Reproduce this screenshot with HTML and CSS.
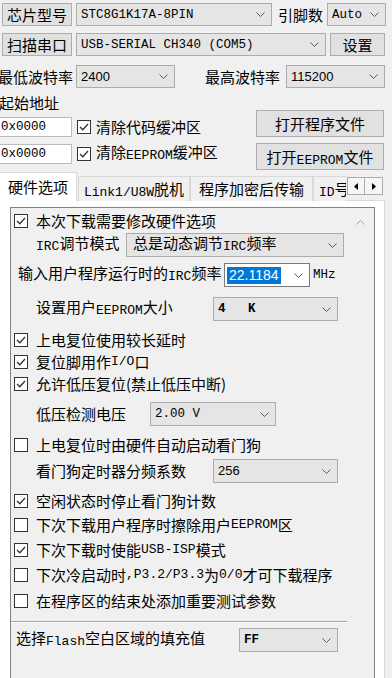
FILE: index.html
```html
<!DOCTYPE html>
<html lang="zh-CN">

<head>
    <meta charset="UTF-8">
    <meta name="viewport" content="width=device-width, initial-scale=1.0">
    <title>STC-ISP</title>
    <link rel="stylesheet" href="styles.css">
</head>

<body>
    <div class="root">
        <div class="bar bar-first">
            <button class="btn btn-head">芯片型号</button>
            <div class="combo combo-chip"><span class="en">STC8G1K17A-8PIN</span><svg class="chev" width="9" height="5" viewBox="0 0 9 5"><path d="M0.5 0.5L4.5 4.5L8.5 0.5"/></svg></div>
            <span class="head-label pin-label">引脚数</span>
            <div class="combo combo-pin"><span class="en">Auto</span><svg class="chev" width="9" height="5" viewBox="0 0 9 5"><path d="M0.5 0.5L4.5 4.5L8.5 0.5"/></svg></div>
        </div>
        <div class="bar">
            <button class="btn btn-head">扫描串口</button>
            <div class="combo combo-port"><span class="en">USB-SERIAL CH340 (COM5)</span><svg class="chev" width="9" height="5" viewBox="0 0 9 5"><path d="M0.5 0.5L4.5 4.5L8.5 0.5"/></svg></div>
            <button class="btn btn-set">设置</button>
        </div>
        <div class="bar bar-baud">
            <span class="head-label baud-min">最低波特率</span>
            <div class="combo combo-baud"><span class="num">2400</span><svg class="chev" width="9" height="5" viewBox="0 0 9 5"><path d="M0.5 0.5L4.5 4.5L8.5 0.5"/></svg></div>
            <span class="head-label baud-max">最高波特率</span>
            <div class="combo combo-baud"><span class="num">115200</span><svg class="chev" width="9" height="5" viewBox="0 0 9 5"><path d="M0.5 0.5L4.5 4.5L8.5 0.5"/></svg></div>
        </div>

        <div class="addr">
            <div class="addr-left">
                <div class="addr-title">起始地址</div>
                <div class="addr-row">
                    <div class="edit"><span class="en">0x0000</span></div>
                    <span class="cbx"><svg width="12" height="12" viewBox="0 0 12 12"><path d="M2 6L4.8 8.8L10 3"/></svg></span>
                    <span>清除代码缓冲区</span>
                </div>
                <div class="addr-row">
                    <div class="edit"><span class="en">0x0000</span></div>
                    <span class="cbx"><svg width="12" height="12" viewBox="0 0 12 12"><path d="M2 6L4.8 8.8L10 3"/></svg></span>
                    <span>清除<span class="en">EEPROM</span>缓冲区</span>
                </div>
            </div>
            <div class="addr-right">
                <button class="btn btn-file">打开程序文件</button>
                <button class="btn btn-file">打开<span class="en">EEPROM</span>文件</button>
            </div>
        </div>

        <div class="tabs">
            <div class="tab-list">
                <div class="tab tab-active">硬件选项</div>
                <div class="tab tab-link"><span class="en">Link1/U8W</span>脱机</div>
                <div class="tab tab-crypt">程序加密后传输</div>
                <div class="tab tab-id"><span class="en">ID</span>号</div>
            </div>
            <div class="spin">
                <div class="spin-btn"><svg width="4" height="7" viewBox="0 0 4 7"><path d="M4 0L0 3.5L4 7Z"/></svg></div>
                <div class="spin-btn"><svg width="4" height="7" viewBox="0 0 4 7"><path d="M0 0L4 3.5L0 7Z"/></svg></div>
            </div>
        </div>

        <div class="panel">
            <div class="option-box">
                <div class="option-list">
                    <div class="opt mt3"><span class="cbx"><svg width="12" height="12" viewBox="0 0 12 12"><path d="M2 6L4.8 8.8L10 3"/></svg></span>本次下载需要修改硬件选项</div>
                    <div class="field indent mt2">
                        <span class="field-label lbl-irc"><span class="en">IRC</span>调节模式</span>
                        <div class="combo combo-irc"><span>总是动态调节<span class="en">IRC</span>频率</span><svg class="chev" width="9" height="5" viewBox="0 0 9 5"><path d="M0.5 0.5L4.5 4.5L8.5 0.5"/></svg></div>
                    </div>
                    <div class="field row-freq mt6">
                        <span class="field-label lbl-freq">输入用户程序运行时的<span class="en">IRC</span>频率</span>
                        <div class="combo combo-edit"><span class="num num-freq sel">22.1184</span><svg class="chev" width="9" height="5" viewBox="0 0 9 5"><path d="M0.5 0.5L4.5 4.5L8.5 0.5"/></svg></div>
                        <span class="en unit">MHz</span>
                    </div>
                    <div class="field indent mt10">
                        <span class="field-label lbl-wide">设置用户<span class="en">EEPROM</span>大小</span>
                        <div class="combo combo-size"><span class="en bold">4&nbsp;&nbsp;&nbsp;K</span><svg class="chev" width="9" height="5" viewBox="0 0 9 5"><path d="M0.5 0.5L4.5 4.5L8.5 0.5"/></svg></div>
                    </div>
                    <div class="opt mt9"><span class="cbx"><svg width="12" height="12" viewBox="0 0 12 12"><path d="M2 6L4.8 8.8L10 3"/></svg></span>上电复位使用较长延时</div>
                    <div class="opt mt2"><span class="cbx"><svg width="12" height="12" viewBox="0 0 12 12"><path d="M2 6L4.8 8.8L10 3"/></svg></span>复位脚用作<span class="en">I/O</span>口</div>
                    <div class="opt mt2"><span class="cbx"><svg width="12" height="12" viewBox="0 0 12 12"><path d="M2 6L4.8 8.8L10 3"/></svg></span>允许低压复位(禁止低压中断)</div>
                    <div class="field indent mt8">
                        <span class="field-label lbl-lvd">低压检测电压</span>
                        <div class="combo combo-lvd"><span class="en">2.00 V</span><svg class="chev" width="9" height="5" viewBox="0 0 9 5"><path d="M0.5 0.5L4.5 4.5L8.5 0.5"/></svg></div>
                    </div>
                    <div class="opt mt9"><span class="cbx"></span>上电复位时由硬件自动启动看门狗</div>
                    <div class="field indent mt4">
                        <span class="field-label lbl-wide">看门狗定时器分频系数</span>
                        <div class="combo combo-size"><span class="num">256</span><svg class="chev" width="9" height="5" viewBox="0 0 9 5"><path d="M0.5 0.5L4.5 4.5L8.5 0.5"/></svg></div>
                    </div>
                    <div class="opt mt8"><span class="cbx"><svg width="12" height="12" viewBox="0 0 12 12"><path d="M2 6L4.8 8.8L10 3"/></svg></span>空闲状态时停止看门狗计数</div>
                    <div class="opt mt4"><span class="cbx"></span>下次下载用户程序时擦除用户<span class="en">EEPROM</span>区</div>
                    <div class="opt mt5"><span class="cbx"><svg width="12" height="12" viewBox="0 0 12 12"><path d="M2 6L4.8 8.8L10 3"/></svg></span>下次下载时使能<span class="en">USB-ISP</span>模式</div>
                    <div class="opt mt5"><span class="cbx"></span>下次冷启动时<span class="en">,P3.2/P3.3</span>为<span class="en">0/0</span>才可下载程序</div>
                    <div class="opt mt6"><span class="cbx"></span>在程序区的结束处添加重要测试参数</div>
                    <div class="sep"></div>
                    <div class="field row-fill mt5">
                        <span class="field-label lbl-fill">选择<span class="en">Flash</span>空白区域的填充值</span>
                        <div class="combo combo-fill"><span class="en bold">FF</span><svg class="chev" width="9" height="5" viewBox="0 0 9 5"><path d="M0.5 0.5L4.5 4.5L8.5 0.5"/></svg></div>
                    </div>
                </div>
                <div class="scroll">
                    <svg width="9" height="5" viewBox="0 0 9 5"><path d="M0.5 4.5L4.5 0.5L8.5 4.5"/></svg>
                </div>
            </div>
        </div>
    </div>
</body>

</html>
```

FILE: styles.css
```css
* {
    margin: 0;
    padding: 0;
    box-sizing: border-box;
}

body {
    width: 392px;
    height: 678px;
    overflow: hidden;
    background-color: #f0f0f0;
    font-family: "Noto Sans CJK SC", sans-serif;
    font-size: 15px;
    line-height: 20px;
    color: #000;
}

.en {
    font-family: "Liberation Mono", monospace;
    font-size: 12.5px;
}

/* latin inside chinese labels sits a bit lower, like the dialog font */
.opt .en,
.field-label .en,
.addr-row .en,
.btn .en,
.tab .en,
.combo-irc .en {
    font-size: 13px;
    vertical-align: -1px;
}

.bold {
    font-weight: bold;
}

.num {
    font-family: "Liberation Sans", sans-serif;
    font-size: 13px;
}

/* top rows */
.bar {
    display: flex;
    align-items: center;
    height: 23px;
    margin-top: 7px;
}

.bar-first {
    margin-top: 3px;
}

.bar-baud {
    margin-top: 9px;
}

.btn {
    font-family: inherit;
    font-size: 15px;
    color: #000;
    height: 23px;
    background-color: #e1e1e1;
    border: 1px solid #adadad;
    white-space: nowrap;
    flex-shrink: 0;
}

.btn-head {
    margin-left: 2px;
    width: 70px;
}

.btn-set {
    margin-left: 4px;
    width: 55px;
}

.head-label {
    white-space: nowrap;
    flex-shrink: 0;
}

.pin-label {
    margin-left: 6px;
    width: 49px;
}

.baud-min {
    margin-left: -2px;
    width: 78px;
}

.baud-max {
    margin-left: 30px;
    width: 81px;
}

.combo {
    display: flex;
    align-items: center;
    height: 23px;
    padding: 0 6px 0 4px;
    background-color: #e5e5e5;
    border: 1px solid #acacac;
    white-space: nowrap;
    overflow: hidden;
    flex-shrink: 0;
}

.chev {
    margin-left: auto;
    flex-shrink: 0;
    fill: none;
    stroke: #5a5a5a;
    stroke-width: 1;
}

.combo-chip {
    margin-left: 4px;
    width: 196px;
}

.combo-pin {
    width: 59px;
}

.combo-port {
    margin-left: 4px;
    width: 250px;
}

.combo-baud {
    width: 99px;
}

/* start address */
.addr {
    display: flex;
    justify-content: space-between;
    margin-top: 4px;
}

.addr-title {
    height: 22px;
    line-height: 22px;
    margin-left: -1px;
}

.addr-row {
    display: flex;
    align-items: center;
    height: 20px;
    margin-top: 3px;
    white-space: nowrap;
}

.addr-row + .addr-row {
    margin-top: 7px;
}

.edit {
    display: flex;
    align-items: center;
    width: 76px;
    height: 20px;
    margin-left: -4px;
    padding-left: 4px;
    background-color: #fff;
    border: 1px solid #bcbcbc;
}

.edit .en {
    vertical-align: 0;
    font-size: 12.5px;
}

.cbx {
    display: flex;
    align-items: center;
    justify-content: center;
    width: 14px;
    height: 14px;
    margin-right: 8px;
    background-color: #fff;
    border: 1px solid #333;
    flex-shrink: 0;
}

.cbx svg {
    fill: none;
    stroke: #333;
    stroke-width: 1.3;
}

.addr-row .cbx {
    margin-left: 5px;
    margin-right: 5px;
}

.addr-right {
    display: flex;
    flex-direction: column;
    gap: 6px;
    padding-top: 18px;
    margin-right: 8px;
}

.btn-file {
    width: 128px;
    height: 27px;
}

/* tabs */
.tabs {
    position: relative;
    z-index: 1;
    display: flex;
    align-items: flex-end;
    height: 29px;
    margin-top: 2px;
}

.tab-list {
    display: flex;
    align-items: flex-end;
    width: 346px;
    height: 100%;
    overflow: hidden;
}

.tab {
    height: 25px;
    line-height: 23px;
    text-align: center;
    white-space: nowrap;
    background-color: #f0f0f0;
    border: 1px solid #d9d9d9;
    border-bottom: none;
    flex-shrink: 0;
}

.tab-active {
    width: 78px;
    height: 29px;
    line-height: 27px;
    margin-left: -1px;
    background-color: #fff;
}

.tab-link {
    width: 112px;
    margin-left: 1px;
}

.tab-crypt {
    width: 123px;
}

.tab-id {
    width: 60px;
    padding-left: 5px;
    text-align: left;
}

.spin {
    display: flex;
    margin: 0 0 6px 1px;
}

.spin-btn {
    display: flex;
    align-items: center;
    justify-content: center;
    width: 18px;
    height: 18px;
    background-color: #f6f6f6;
    border: 1px solid #adadad;
}

.spin-btn + .spin-btn {
    border-left: none;
}

/* hardware options page */
.panel {
    width: 386px;
    height: 480px;
    margin: -1px 0 0 -1px;
    padding: 6px 0 0 10px;
    background-color: #fff;
    border: 1px solid #d9d9d9;
}

.option-box {
    display: flex;
    width: 365px;
    height: 500px;
    background-color: #f0f0f0;
    border: 1px solid #828282;
}

.option-list {
    display: flex;
    flex-direction: column;
    width: 336px;
    padding-left: 3px;
}

.scroll {
    display: flex;
    justify-content: center;
    width: 27px;
    padding-top: 12px;
}

.scroll svg {
    fill: none;
    stroke: #a3a3a3;
    stroke-width: 1;
}

.opt {
    display: flex;
    align-items: center;
    height: 20px;
    white-space: nowrap;
}

.field {
    display: flex;
    align-items: center;
    height: 24px;
    white-space: nowrap;
}

.field .combo {
    height: 24px;
}

.field-label {
    flex-shrink: 0;
}

.indent {
    padding-left: 22px;
}

.row-freq {
    padding-left: 4px;
}

.row-fill {
    padding-left: 2px;
}

.lbl-irc {
    width: 90px;
}

.lbl-freq {
    width: 206px;
}

.lbl-wide {
    width: 177px;
}

.lbl-lvd {
    width: 114px;
}

.lbl-fill {
    width: 223px;
}

.combo-irc {
    width: 218px;
    padding-left: 6px;
}

.combo-edit {
    width: 86px;
    padding-left: 2px;
    background-color: #fff;
    border-color: #7a7a7a;
}

.num-freq {
    font-size: 14px;
}

.sel {
    background-color: #0078d7;
    color: #fff;
    padding: 0 2px;
    line-height: 17px;
}

.unit {
    margin-left: 3px;
}

.combo-size {
    width: 125px;
}

.combo-lvd {
    width: 126px;
}

.combo-fill {
    width: 99px;
}

.sep {
    height: 2px;
    margin: 10px 0 0 -3px;
    border-top: 1px solid #a0a0a0;
    border-bottom: 1px solid #fff;
}

.mt2 {
    margin-top: 2px;
}

.mt3 {
    margin-top: 3px;
}

.mt4 {
    margin-top: 4px;
}

.mt5 {
    margin-top: 5px;
}

.mt6 {
    margin-top: 6px;
}

.mt8 {
    margin-top: 8px;
}

.mt9 {
    margin-top: 9px;
}

.mt10 {
    margin-top: 10px;
}
```
